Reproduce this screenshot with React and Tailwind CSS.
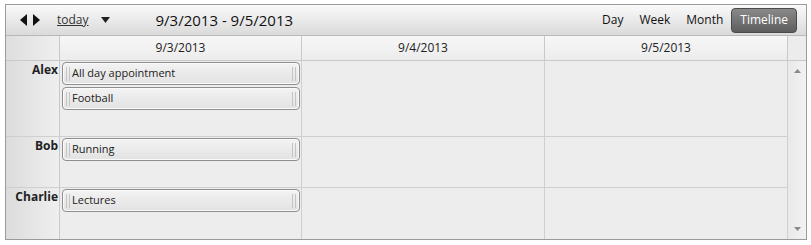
import React from 'react';

const days = ['9/3/2013', '9/4/2013', '9/5/2013'];
const widths = ['w-[242px]', 'w-[243px]', 'w-[242px]'];

const rows = [
  { name: 'Alex', h: 'h-[76px]', events: ['All day appointment', 'Football'] },
  { name: 'Bob', h: 'h-[51px]', events: ['Running'] },
  { name: 'Charlie', h: 'h-[51px]', events: ['Lectures'] },
];

const Event = ({ title }) => (
  <div className="h-[23px] mb-[2px] flex items-center rounded-[4px] border border-[#8f8f8f] bg-gradient-to-b from-[#f3f3f3] to-[#e2e2e2] shadow-[inset_0_0_0_1px_#fafafa]">
    <div className="w-[4px] h-[14px] ml-[3px] border-l border-r border-[#c4c4c4]" />
    <span className="ml-[2px] flex-1 text-[11px] leading-[14px] pb-[2px] text-[#222]">{title}</span>
    <div className="w-[4px] h-[14px] mr-[3px] border-l border-r border-[#c4c4c4]" />
  </div>
);

const App = () => {
  return (
    <div className="w-[811px] h-[245px] bg-white pt-[4px] pl-[5px] font-['Segoe_UI','Open_Sans',sans-serif]">
      <div className="w-[802px] h-[236px] border border-[#9a9a9a] flex flex-col bg-[#ededed]">
        {/* toolbar */}
        <div className="h-[31px] flex items-center bg-gradient-to-b from-[#fafafa] to-[#dadada] border-b border-[#b9b9b9]">
          <div className="ml-[14px] flex items-center gap-[4px]">
            <svg width="8" height="12" viewBox="0 0 8 12"><path d="M7 0 L0 6 L7 12 Z" fill="#111" /></svg>
            <svg width="8" height="12" viewBox="0 0 8 12"><path d="M1 0 L8 6 L1 12 Z" fill="#111" /></svg>
          </div>
          <span className="ml-[17px] text-[12px] underline text-[#333]">today</span>
          <svg className="ml-[12px]" width="9" height="6" viewBox="0 0 9 6"><path d="M0 0 L9 0 L4.5 6 Z" fill="#222" /></svg>
          <span className="ml-[46px] text-[15px] text-[#111]">9/3/2013 - 9/5/2013</span>
          <div className="ml-auto flex items-center text-[12px] text-[#111]">
            <span className="mr-[16px]">Day</span>
            <span className="mr-[16px]">Week</span>
            <span className="mr-[8px]">Month</span>
            <span className="mr-[9px] h-[25px] px-[8px] flex items-center rounded-[4px] border border-[#4a4a4a] bg-gradient-to-b from-[#8a8a8a] to-[#5e5e5e] text-white">Timeline</span>
          </div>
        </div>
        {/* header */}
        <div className="flex h-[25px] border-b border-[#c9c9c9]">
          <div className="w-[54px] bg-gradient-to-r from-[#dedede] to-[#efefef] border-r border-[#c9c9c9]" />
          {days.map((d, i) => (
            <div key={d} className={`${widths[i]} flex items-center justify-center text-[12px] text-[#222] bg-gradient-to-b from-[#f7f7f7] to-[#ececec] ${i < 2 ? 'border-r border-[#c9c9c9]' : ''}`}>{d}</div>
          ))}
          <div className="flex-1 bg-[#ececec] border-l border-[#c9c9c9]" />
        </div>
        {/* body */}
        <div className="flex flex-1">
          <div className="flex flex-col">
            {rows.map((r, ri) => (
              <div key={r.name} className={`flex ${r.h} ${ri < rows.length - 1 ? 'border-b border-[#cfcfcf]' : ''}`}>
                <div className="w-[54px] bg-gradient-to-r from-[#dcdcdc] to-[#efefef] border-r border-[#c9c9c9] flex justify-end pr-[1px] pt-[1px]">
                  <span className="text-[12px] font-bold text-[#222] leading-[16px]">{r.name}</span>
                </div>
                <div className="w-[242px] border-r border-[#cfcfcf] pl-[2px] pr-[1px] pt-[1px]">
                  {r.events.map((e) => <Event key={e} title={e} />)}
                </div>
                <div className="w-[243px] border-r border-[#cfcfcf]" />
                <div className="w-[242px]" />
              </div>
            ))}
          </div>
          <div className="flex-1 border-l border-[#cfcfcf] bg-gradient-to-r from-[#e9e9e9] to-[#f2f2f2] flex flex-col items-center justify-between py-[8px]">
            <svg width="7" height="4" viewBox="0 0 7 4"><path d="M0 4 L3.5 0 L7 4 Z" fill="#8a8a8a" /></svg>
            <svg width="7" height="4" viewBox="0 0 7 4"><path d="M0 0 L7 0 L3.5 4 Z" fill="#8a8a8a" /></svg>
          </div>
        </div>
      </div>
    </div>
  );
};

export default App;
